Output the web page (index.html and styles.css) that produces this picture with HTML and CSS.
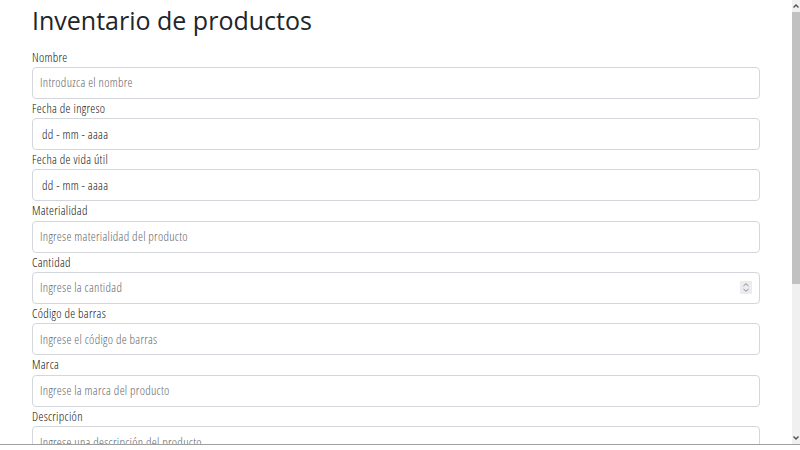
FILE: index.html
```html
<!DOCTYPE html>
<html lang="es">
<head>
<meta charset="utf-8">
<title>Inventario de productos</title>
<link rel="stylesheet" href="styles.css">
</head>
<body>
<div class="window">
  <div class="viewport">
    <main class="page">
      <h1 class="title">Inventario de productos</h1>
      <form class="form">
        <div class="group">
          <label class="label" for="nombre">Nombre</label>
          <input class="control" id="nombre" type="text" placeholder="Introduzca el nombre">
        </div>
        <div class="group">
          <label class="label" for="ingreso">Fecha de ingreso</label>
          <input class="control date" id="ingreso" type="text" value="dd - mm - aaaa">
        </div>
        <div class="group">
          <label class="label" for="vida">Fecha de vida útil</label>
          <input class="control date" id="vida" type="text" value="dd - mm - aaaa">
        </div>
        <div class="group">
          <label class="label" for="mat">Materialidad</label>
          <input class="control" id="mat" type="text" placeholder="Ingrese materialidad del producto">
        </div>
        <div class="group">
          <label class="label" for="cant">Cantidad</label>
          <div class="control number">
            <input class="bare" id="cant" type="text" placeholder="Ingrese la cantidad">
            <span class="spinner">
              <svg width="12" height="13" viewBox="0 0 12 13"><path d="M3.5 5 L6 2.7 L8.5 5" fill="none" stroke="#8a8a8a" stroke-width="1"/><path d="M3.5 8 L6 10.3 L8.5 8" fill="none" stroke="#8a8a8a" stroke-width="1"/></svg>
            </span>
          </div>
        </div>
        <div class="group">
          <label class="label" for="codigo">Código de barras</label>
          <input class="control" id="codigo" type="text" placeholder="Ingrese el código de barras">
        </div>
        <div class="group">
          <label class="label" for="marca">Marca</label>
          <input class="control" id="marca" type="text" placeholder="Ingrese la marca del producto">
        </div>
        <div class="group">
          <label class="label" for="desc">Descripción</label>
          <textarea class="control area" id="desc" placeholder="Ingrese una descripción del producto"></textarea>
        </div>
      </form>
    </main>
    <div class="scrollbar">
      <div class="arrow">
        <svg width="8" height="12" viewBox="0 0 8 12"><path d="M1.5 7.5 L4 5 L6.5 7.5" fill="none" stroke="#505050" stroke-width="1.4"/></svg>
      </div>
      <div class="track"><div class="thumb"></div></div>
      <div class="arrow">
        <svg width="8" height="12" viewBox="0 0 8 12"><path d="M1.5 4.5 L4 7 L6.5 4.5" fill="none" stroke="#505050" stroke-width="1.4"/></svg>
      </div>
    </div>
  </div>
  <div class="bottom"></div>
</div>
</body>
</html>
```
FILE: styles.css
```css
* { box-sizing: border-box; }
html, body {
  margin: 0;
  height: 450px;
  overflow: hidden;
  background: #fff;
}
body {
  font-family: "Open Sans", "Noto Sans", sans-serif;
  font-stretch: 75%;
  font-weight: 300;
  letter-spacing: 0.3px;
  color: #212529;
}
.window {
  display: flex;
  flex-direction: column;
  height: 450px;
}
.viewport {
  display: flex;
  height: 444px;
  overflow: hidden;
}
.page {
  flex: 1;
  padding: 5px 32px 0 32px;
  overflow: hidden;
}
.title {
  margin: 0 0 12.5px 0;
  font-size: 25px;
  font-stretch: 100%;
  font-weight: 400;
  letter-spacing: 0;
  line-height: 30px;
  color: #212529;
}
.form {
  display: flex;
  flex-direction: column;
}
.group {
  display: flex;
  flex-direction: column;
}
.label {
  font-size: 12.5px;
  line-height: 19.3px;
  height: 19.3px;
  color: #111;
}
.control {
  display: block;
  width: 100%;
  height: 32px;
  border: 1px solid #d3d7dc;
  border-radius: 4px;
  padding: 0 7px;
  font-family: inherit;
  font-stretch: inherit;
  font-weight: inherit;
  letter-spacing: inherit;
  font-size: 12.5px;
  color: #111;
  background: #fff;
  outline: none;
}
.control::placeholder, .bare::placeholder { color: #5f666d; opacity: 1; }
.date { padding-left: 9px; }
.number {
  display: flex;
  align-items: center;
  padding-right: 7px;
}
.bare {
  flex: 1;
  border: 0;
  padding: 0;
  outline: none;
  font-family: inherit;
  font-stretch: inherit;
  font-weight: inherit;
  letter-spacing: inherit;
  font-size: 12.5px;
  background: transparent;
}
.spinner {
  display: flex;
  width: 12px;
  height: 13px;
  background: #ececf0;
}
.area {
  height: 40px;
  resize: none;
  padding-top: 7px;
}
.scrollbar {
  width: 8px;
  display: flex;
  flex-direction: column;
  background: #f0f0f0;
}
.arrow {
  height: 12px;
  display: flex;
}
.track {
  flex: 1;
}
.thumb {
  height: 272px;
  background: #c1c1c1;
}
.bottom {
  height: 6px;
  border-top: 1px solid #a0a0a0;
  background: #fff;
}
```
